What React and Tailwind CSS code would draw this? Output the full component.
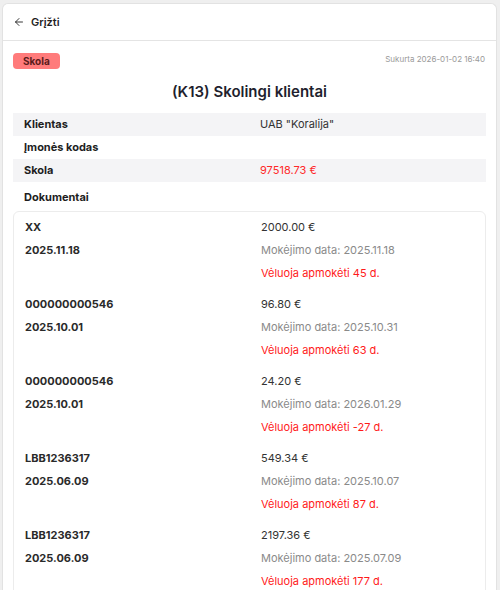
import { ArrowLeft } from "lucide-react";

const docs = [
  { nr: "XX", date: "2025.11.18", sum: "2000.00 €", pay: "2025.11.18", late: "Vėluoja apmokėti 45 d." },
  { nr: "000000000546", date: "2025.10.01", sum: "96.80 €", pay: "2025.10.31", late: "Vėluoja apmokėti 63 d." },
  { nr: "000000000546", date: "2025.10.01", sum: "24.20 €", pay: "2026.01.29", late: "Vėluoja apmokėti -27 d." },
  { nr: "LBB1236317", date: "2025.06.09", sum: "549.34 €", pay: "2025.10.07", late: "Vėluoja apmokėti 87 d." },
  { nr: "LBB1236317", date: "2025.06.09", sum: "2197.36 €", pay: "2025.07.09", late: "Vėluoja apmokėti 177 d." },
];

function InfoRow({ label, value, shaded, valueClass = "text-[#333]" }) {
  return (
    <div className={`grid grid-cols-[236px_1fr] items-center h-[23px] px-[11px] ${shaded ? "bg-[#f4f4f6]" : ""}`}>
      <div className="font-bold text-[#1e1e1e]">{label}</div>
      <div className={valueClass}>{value}</div>
    </div>
  );
}

export default function App() {
  return (
    <div
      className="min-h-[590px] bg-[#efefef] pt-[3px] pl-[2px] pr-[3px] text-[11px]"
      style={{ fontFamily: "Inter, 'Noto Sans', sans-serif" }}
    >
      <div className="bg-white rounded-t-[6px] border border-[#e2e2e2] border-b-0 min-h-[587px]">
        <div className="flex items-center gap-[6px] h-[37px] px-[10px] border-b border-[#e4e4e4]">
          <ArrowLeft size={12} strokeWidth={1.8} className="text-[#222]" />
          <span className="font-semibold text-[11px] text-[#1e1e1e]">Grįžti</span>
        </div>

        <div className="px-[10px]">
          <div className="flex items-start justify-between pt-[12px]">
            <span className="bg-[#ff7b7b] text-[#5a1c1c] font-bold text-[10px] rounded-[4px] px-[10px] h-[16px] flex items-center">
              Skola
            </span>
            <span className="text-[8px] text-[#9a9a9a] pr-[1px]">Sukurta 2026-01-02 16:40</span>
          </div>

          <h1 className="text-center text-[15px] font-semibold text-[#1f1f2e] mt-[12px] mb-[9px]">
            (K13) Skolingi klientai
          </h1>

          <div className="flex flex-col">
            <InfoRow label="Klientas" value={'UAB "Koralija"'} shaded />
            <InfoRow label="Įmonės kodas" value="" />
            <InfoRow label="Skola" value="97518.73 €" shaded valueClass="text-[#ff2a2a]" />
            <div className="h-[29px] flex items-center pt-[3px] px-[11px] font-bold text-[#1e1e1e]">Dokumentai</div>
          </div>

          <div className="border border-[#ececec] rounded-[6px] px-[11px] pt-[4px]">
            {docs.map((d, i) => (
              <div key={i} className="grid grid-cols-[236px_1fr] mb-[8px]">
                <div className="flex flex-col">
                  <div className="h-[23px] flex items-center font-bold text-[#2a2a2a]">{d.nr}</div>
                  <div className="h-[23px] flex items-center font-bold text-[#2a2a2a]">{d.date}</div>
                </div>
                <div className="flex flex-col">
                  <div className="h-[23px] flex items-center text-[#333]">{d.sum}</div>
                  <div className="h-[23px] flex items-center text-[#8a8a8a]">Mokėjimo data: {d.pay}</div>
                  <div className="h-[23px] flex items-center text-[#ff1a1a]">{d.late}</div>
                </div>
              </div>
            ))}
          </div>
        </div>
      </div>
    </div>
  );
}
